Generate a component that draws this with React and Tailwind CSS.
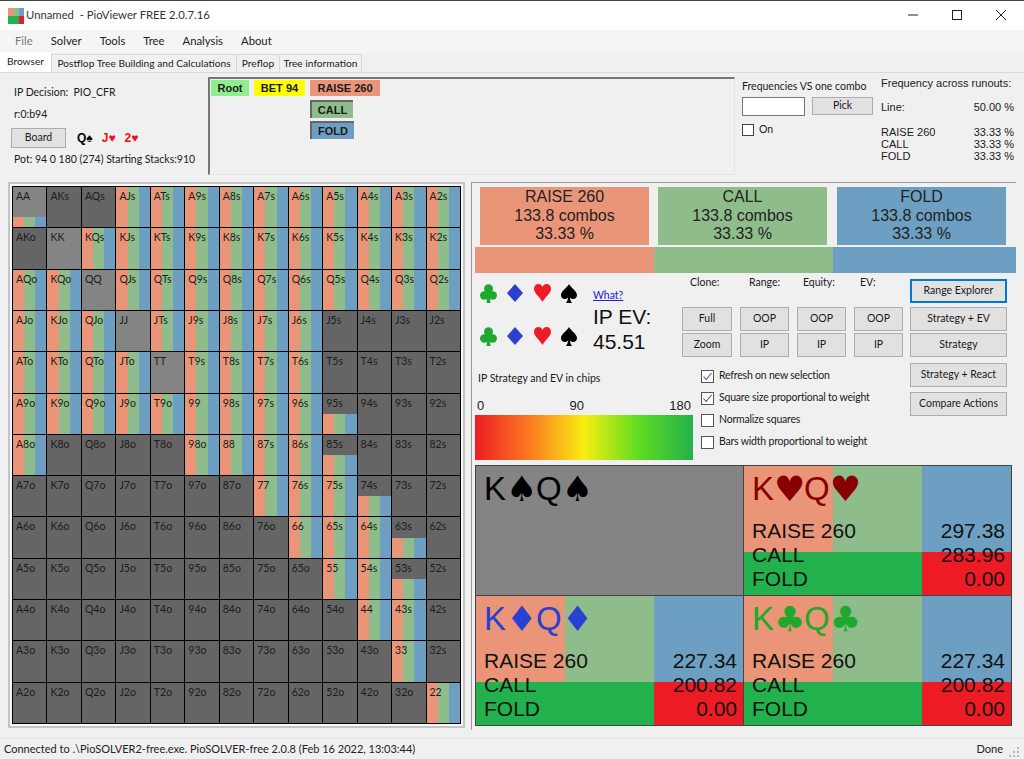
const ranks = ['A', 'K', 'Q', 'J', 'T', '9', '8', '7', '6', '5', '4', '3', '2'];

// how much of each square is filled, by row: anything not listed stays empty
const filled = [
  { 0: 0.25, 3: 1, 4: 1, 5: 1, 6: 1, 7: 1, 8: 1, 9: 1, 10: 1, 11: 1, 12: 1 },
  { 2: 1, 3: 1, 4: 1, 5: 1, 6: 1, 7: 1, 8: 1, 9: 1, 10: 1, 11: 1, 12: 1 },
  { 0: 1, 1: 1, 3: 1, 4: 1, 5: 1, 6: 1, 7: 1, 8: 1, 9: 1, 10: 1, 11: 1, 12: 1 },
  { 0: 1, 1: 1, 2: 1, 4: 1, 5: 1, 6: 1, 7: 1, 8: 1 },
  { 0: 1, 1: 1, 2: 1, 3: 1, 5: 1, 6: 1, 7: 1, 8: 1 },
  { 0: 1, 1: 1, 2: 1, 3: 1, 4: 1, 5: 1, 6: 1, 7: 1, 8: 1, 9: 0.5 },
  { 0: 1, 5: 1, 6: 1, 7: 1, 8: 1, 9: 0.5 },
  { 7: 1, 8: 1, 9: 1, 10: 0.5 },
  { 8: 1, 9: 1, 10: 1, 11: 0.5 },
  { 9: 1, 10: 1, 11: 0.5 },
  { 10: 1, 11: 1 },
  { 11: 1 },
  { 12: 1 },
];

const cells = ranks.flatMap((rowRank, r) =>
  ranks.map((colRank, c) => {
    let label = rowRank + colRank;
    if (c > r) label += 's';
    if (c < r) label = colRank + rowRank + 'o';
    return { label, pair: r === c, fill: filled[r][c] || 0 };
  })
);

function RangeCell({ label, pair, fill }) {
  return (
    <div className={`relative flex flex-col justify-end ${pair ? 'bg-[#848484]' : 'bg-[#656565]'}`}>
      {fill > 0 && (
        <div className="flex" style={{ height: `${fill * 100}%` }}>
          <div className="flex-1 bg-[#ea9577]" />
          <div className="flex-1 bg-[#8fbc8b]" />
          <div className="flex-1 bg-[#6c9fc2]" />
        </div>
      )}
      <span className="absolute left-[3px] top-[3px] text-[10.5px] leading-[13px] text-[#1c1c1c]">{label}</span>
    </div>
  );
}

function Button({ children, className = '', focused }) {
  return (
    <div className={`flex items-center justify-center bg-[#e1e1e1] text-[10.5px] text-[#1a1a1a] ${focused ? 'border-2 border-[#0078d7]' : 'border border-[#adadad]'} ${className}`}>
      {children}
    </div>
  );
}

function Checkbox({ checked, label }) {
  return (
    <div className="flex h-[22px] items-center gap-[5px] text-[10.5px] tracking-[-0.2px] text-[#1a1a1a]">
      <div className="flex h-[13px] w-[13px] items-center justify-center border border-[#555] bg-white">
        {checked && (
          <svg viewBox="0 0 11 11" className="h-[11px] w-[11px]">
            <path d="M1.5 5.5 L4.2 8.5 L9.5 2" fill="none" stroke="#555" strokeWidth="1.1" />
          </svg>
        )}
      </div>
      <span>{label}</span>
    </div>
  );
}

function ActionBox({ color, name }) {
  return (
    <div className={`flex h-[58px] w-[169px] flex-col items-center justify-center font-['Liberation_Sans',sans-serif] text-[16px] leading-[18.5px] text-[#222] ${color}`}>
      <span>{name}</span>
      <span>133.8 combos</span>
      <span>33.33 %</span>
    </div>
  );
}

function HandLabel({ suit, color }) {
  return (
    <div className={`absolute left-[8px] top-[3px] flex h-[40px] items-center text-[33px] leading-[40px] ${color}`}>
      <span>K</span>
      <span className="w-[30px] text-center font-['DejaVu_Sans',sans-serif] text-[35px] leading-[40px]">{suit}</span>
      <span>Q</span>
      <span className="w-[30px] text-center font-['DejaVu_Sans',sans-serif] text-[35px] leading-[40px]">{suit}</span>
    </div>
  );
}

function HandCell({ suit, color, values, empty }) {
  return (
    <div className={`relative h-[129px] font-['Liberation_Sans',sans-serif] ${empty ? 'bg-[#848484]' : 'bg-[#6c9fc2]'}`}>
      {!empty && (
        <div className="flex h-full flex-col">
          <div className="flex h-[86px]">
            <div className="w-1/3 bg-[#ea9577]" />
            <div className="w-1/3 bg-[#8fbc8b]" />
            <div className="w-1/3 bg-[#6c9fc2]" />
          </div>
          <div className="flex flex-1">
            <div className="w-2/3 bg-[#22b14c]" />
            <div className="w-1/3 bg-[#ed1c24]" />
          </div>
        </div>
      )}
      <HandLabel suit={suit} color={color} />
      {!empty && (
        <div className="absolute left-[8px] right-[6px] top-[53px] text-[21px] leading-[24px] text-[#111]">
          {['RAISE 260', 'CALL', 'FOLD'].map((name, i) => (
            <div key={name} className="flex justify-between">
              <span>{name}</span>
              <span>{values[i]}</span>
            </div>
          ))}
        </div>
      )}
    </div>
  );
}

function SuitRow() {
  return (
    <div className="flex h-[26px] items-center pl-[5px]">
      <svg viewBox="0 0 17 19" className="h-[19px] w-[17px] fill-[#1fa82e]">
        <circle cx="8.5" cy="4.7" r="4.5" />
        <circle cx="4.2" cy="11.5" r="4.2" />
        <circle cx="12.8" cy="11.5" r="4.2" />
        <path d="M7.5 8 H9.5 L10.5 19 H6.5 Z" />
      </svg>
      <svg viewBox="0 0 16 18" className="ml-[10px] h-[18px] w-[16px] fill-[#2b3fd0]">
        <path d="M8 0 L16 9 L8 18 L0 9 Z" />
      </svg>
      <svg viewBox="0 0 17 18" className="ml-[11px] h-[18px] w-[17px] fill-[#ee1c25]">
        <path d="M8.5 18 C6 13 0 9.5 0 4.8 C0 1.8 2.2 0 4.5 0 C6.3 0 7.8 1 8.5 3 C9.2 1 10.7 0 12.5 0 C14.8 0 17 1.8 17 4.8 C17 9.5 11 13 8.5 18 Z" />
      </svg>
      <svg viewBox="0 0 16 19" className="ml-[10px] h-[19px] w-[16px] fill-black">
        <path d="M8 0 C10 4 16 7 16 11 C16 13.5 14.2 15 12.2 15 C10.8 15 9.6 14.2 9 13.2 C9.1 15.5 9.8 17.5 11 19 H5 C6.2 17.5 6.9 15.5 7 13.2 C6.4 14.2 5.2 15 3.8 15 C1.8 15 0 13.5 0 11 C0 7 6 4 8 0 Z" />
      </svg>
    </div>
  );
}

const menus = ['Solver', 'Tools', 'Tree', 'Analysis', 'About'];

export default function App() {
  return (
    <div className="flex h-[759px] w-[1024px] flex-col overflow-hidden bg-[#f0f0f0] font-['Lato',sans-serif] text-[#1a1a1a]">
      {/* Title bar */}
      <div className="flex h-[30px] shrink-0 items-center border-t border-[#444] bg-white pl-[8px]">
        <div className="flex h-[16px] w-[16px] flex-col">
          <div className="flex h-[8px]">
            <div className="w-[6px] bg-[#ea9577]" />
            <div className="w-[5px] bg-[#8fbc8b]" />
            <div className="w-[5px] bg-[#6c9fc2]" />
          </div>
          <div className="flex h-[8px]">
            <div className="w-[11px] bg-[#22b14c]" />
            <div className="w-[5px] bg-[#ed1c24]" />
          </div>
        </div>
        <span className="ml-[2px] whitespace-pre text-[11.3px] text-[#333]">Unnamed  - PioViewer FREE 2.0.7.16</span>
        <div className="ml-auto flex items-center gap-[34px] pb-[2px] pr-[18px]">
          <svg viewBox="0 0 10 10" className="h-[10px] w-[10px]"><path d="M0 5 H10" stroke="#222" /></svg>
          <svg viewBox="0 0 10 10" className="h-[10px] w-[10px]"><rect x="0.5" y="0.5" width="9" height="9" fill="none" stroke="#222" /></svg>
          <svg viewBox="0 0 10 10" className="h-[10px] w-[10px]"><path d="M0 0 L10 10 M10 0 L0 10" stroke="#222" /></svg>
        </div>
      </div>

      {/* Menu */}
      <div className="flex h-[23px] shrink-0 items-center gap-[18px] bg-[#f5f5f5] pl-[15px] text-[11.3px] text-[#222]">
        <span className="text-[#777]">File</span>
        {menus.map((menu) => (
          <span key={menu}>{menu}</span>
        ))}
      </div>

      {/* Tabs */}
      <div className="flex h-[20px] shrink-0 items-end whitespace-nowrap border-b border-[#d9d9d9] text-[10.2px] text-[#222]">
        <div className="flex h-[20px] w-[51px] items-center justify-center bg-white">Browser</div>
        <div className="flex h-[18px] w-[186px] items-center justify-center border border-b-0 border-[#d9d9d9]">Postflop Tree Building and Calculations</div>
        <div className="flex h-[18px] w-[43px] items-center justify-center border border-b-0 border-l-0 border-[#d9d9d9]">Preflop</div>
        <div className="flex h-[18px] w-[82px] items-center justify-center border border-b-0 border-l-0 border-[#d9d9d9]">Tree information</div>
      </div>

      {/* Top panel */}
      <div className="flex h-[109px] shrink-0 text-[10.5px]">
        <div className="w-[208px] shrink-0 pl-[11px]">
          <div className="ml-[3px] mt-[12px] whitespace-pre">IP Decision:  PIO_CFR</div>
          <div className="ml-[3px] mt-[6px]">r:0:b94</div>
          <div className="mt-[5px] flex items-center">
            <Button className="h-[20px] w-[55px]">Board</Button>
            <div className="ml-[11px] flex gap-[9px] font-['Liberation_Sans',sans-serif] text-[12px] font-bold">
              <span className="text-black">Q♠</span>
              <span className="text-[#ee1111]">J♥</span>
              <span className="text-[#ee1111]">2♥</span>
            </div>
          </div>
          <div className="ml-[3px] mt-[4px] whitespace-nowrap">Pot: 94 0 180 (274) Starting Stacks:910</div>
        </div>

        <div className="mt-[4px] h-[98px] w-[527px] shrink-0 border-b border-l-2 border-r border-t-2 border-b-[#e3e3e3] border-l-[#777] border-r-[#e3e3e3] border-t-[#777] pl-[1px] pt-[1px] font-['Liberation_Sans',sans-serif] text-[11px] font-bold">
          <div className="flex gap-[5px]">
            <div className="flex h-[16px] w-[38px] items-center justify-center bg-[#90ee90]">Root</div>
            <div className="flex h-[16px] w-[51px] items-center justify-center bg-[#ffff00]">BET 94</div>
            <div className="flex h-[16px] w-[70px] items-center justify-center bg-[#ea9577]">RAISE 260</div>
          </div>
          <div className="ml-[99px] mt-[4px] flex h-[18px] w-[43px] items-center justify-center border-l-2 border-t-2 border-[#666] bg-[#8fbc8b]">CALL</div>
          <div className="ml-[99px] mt-[3px] flex h-[18px] w-[44px] items-center justify-center border-l-2 border-t-2 border-[#666] bg-[#6c9fc2]">FOLD</div>
        </div>

        <div className="ml-[7px] w-[133px] shrink-0">
          <div className="mt-[6px] whitespace-nowrap">Frequencies VS one combo</div>
          <div className="mt-[2px] flex items-center gap-[7px]">
            <div className="h-[19px] w-[63px] border border-[#777] bg-white" />
            <Button className="h-[18px] w-[61px]">Pick</Button>
          </div>
          <div className="mt-[6px] flex items-center gap-[5px]">
            <div className="h-[12px] w-[12px] border border-[#444] bg-white" />
            <span>On</span>
          </div>
        </div>

        <div className="ml-[6px] w-[133px] shrink-0 pt-[2px] font-['Liberation_Sans',sans-serif] text-[11px]">
          <div className="whitespace-nowrap">Frequency across runouts:</div>
          <div className="mt-[7px] flex justify-between"><span>Line:</span><span>50.00 %</span></div>
          <div className="mt-[11px] leading-[12px]">
            <div className="flex justify-between"><span>RAISE 260</span><span>33.33 %</span></div>
            <div className="flex justify-between"><span>CALL</span><span>33.33 %</span></div>
            <div className="flex justify-between"><span>FOLD</span><span>33.33 %</span></div>
          </div>
        </div>
      </div>

      {/* Main area */}
      <div className="flex h-[548px] shrink-0 pl-[8px]">
        <div className="h-[546px] w-[457px] shrink-0 border-2 border-[#c4c4c4] bg-white/40 p-[2px]">
          <div className="grid h-[538px] w-[449px] grid-cols-[repeat(13,1fr)] grid-rows-[repeat(13,1fr)] gap-px border border-black bg-black">
            {cells.map((cell) => (
              <RangeCell key={cell.label} {...cell} />
            ))}
          </div>
        </div>

        <div className="ml-[6px] w-[545px] shrink-0 border-l border-t border-[#9a9a9a] pl-[3px] pt-[4px]">
          <div className="flex pl-[5px]">
            <ActionBox color="bg-[#ea9577]" name="RAISE 260" />
            <div className="w-[9px]" />
            <ActionBox color="bg-[#8fbc8b]" name="CALL" />
            <div className="w-[10px]" />
            <ActionBox color="bg-[#6c9fc2]" name="FOLD" />
          </div>
          <div className="mt-[2px] flex h-[26px] w-[541px]">
            <div className="w-[179px] bg-[#ea9577]" />
            <div className="w-[179px] bg-[#8fbc8b]" />
            <div className="flex-1 bg-[#6c9fc2]" />
          </div>

          <div className="flex h-[192px]">
            <div className="w-[218px] shrink-0">
              <div className="flex">
                <div className="w-[118px] shrink-0 pt-[7px]">
                  <SuitRow />
                  <div className="mt-[17px]"><SuitRow /></div>
                </div>
                <div className="pt-[16px]">
                  <a className="block text-[10.5px] leading-[13px] text-[#2020d0] underline">What?</a>
                  <div className="mt-[2px] font-['Liberation_Sans',sans-serif] text-[21px] leading-[25px] text-[#111]">IP EV:<br />45.51</div>
                </div>
              </div>
              <div className="ml-[3px] mt-[18px] text-[10.5px] leading-[13px]">IP Strategy and EV in chips</div>
              <div className="mt-[13px] flex justify-between px-[2px] font-['Liberation_Sans',sans-serif] text-[13px] leading-[15px]">
                <span>0</span>
                <span>90</span>
                <span>180</span>
              </div>
              <div className="mt-[2px] h-[45px] bg-[linear-gradient(90deg,#ed1c24,#fb7a20_25%,#f8ee12_50%,#5fdc20_75%,#22b14c)]" />
            </div>

            <div className="ml-[-11px] w-[228px] shrink-0">
              <div className="flex pt-[3px] text-[10.5px] leading-[13px]">
                <span className="ml-[8px] w-[59px]">Clone:</span>
                <span className="w-[54px]">Range:</span>
                <span className="w-[57px]">Equity:</span>
                <span>EV:</span>
              </div>
              <div className="mt-[18px] flex gap-[8px]">
                <div className="flex flex-col gap-[2px]"><Button className="h-[24px] w-[50px]">Full</Button><Button className="h-[24px] w-[50px]">Zoom</Button></div>
                <div className="flex flex-col gap-[2px]"><Button className="h-[24px] w-[49px]">OOP</Button><Button className="h-[24px] w-[49px]">IP</Button></div>
                <div className="flex flex-col gap-[2px]"><Button className="h-[24px] w-[49px]">OOP</Button><Button className="h-[24px] w-[49px]">IP</Button></div>
                <div className="flex flex-col gap-[2px]"><Button className="h-[24px] w-[49px]">OOP</Button><Button className="h-[24px] w-[49px]">IP</Button></div>
              </div>
              <div className="ml-[19px] mt-[8px]">
                <Checkbox checked label="Refresh on new selection" />
                <Checkbox checked label="Square size proportional to weight" />
                <Checkbox label="Normalize squares" />
                <Checkbox label="Bars width proportional to weight" />
              </div>
            </div>

            <div className="w-[97px] shrink-0 pt-[6px]">
              <Button focused className="h-[24px]">Range Explorer</Button>
              <Button className="mt-[4px] h-[24px]">Strategy + EV</Button>
              <Button className="mt-[2px] h-[24px]">Strategy</Button>
              <Button className="mt-[6px] h-[24px]">Strategy + React</Button>
              <Button className="mt-[5px] h-[24px]">Compare Actions</Button>
            </div>
          </div>

          <div className="grid w-[537px] grid-cols-2 gap-px border border-[#444] bg-[#444]">
            <HandCell empty suit="♠" color="text-black" />
            <HandCell suit="♥" color="text-[#880000]" values={['297.38', '283.96', '0.00']} />
            <HandCell suit="♦" color="text-[#2b3fd0]" values={['227.34', '200.82', '0.00']} />
            <HandCell suit="♣" color="text-[#1fa82e]" values={['227.34', '200.82', '0.00']} />
          </div>
        </div>
      </div>

      {/* Status bar */}
      <div className="mt-auto flex h-[21px] items-center justify-between border-t border-[#e4e4e4] pl-[4px] text-[11px] text-[#222]">
        <span>Connected to .\PioSOLVER2-free.exe. PioSOLVER-free 2.0.8 (Feb 16 2022, 13:03:44)</span>
        <div className="flex items-center gap-[5px] pr-[4px]">
          <span>Done</span>
          <svg viewBox="0 0 12 12" className="mt-[6px] h-[12px] w-[12px] fill-[#bbb]">
            <rect x="9" y="1" width="2" height="2" />
            <rect x="5" y="5" width="2" height="2" />
            <rect x="9" y="5" width="2" height="2" />
            <rect x="1" y="9" width="2" height="2" />
            <rect x="5" y="9" width="2" height="2" />
            <rect x="9" y="9" width="2" height="2" />
          </svg>
        </div>
      </div>
    </div>
  );
}
